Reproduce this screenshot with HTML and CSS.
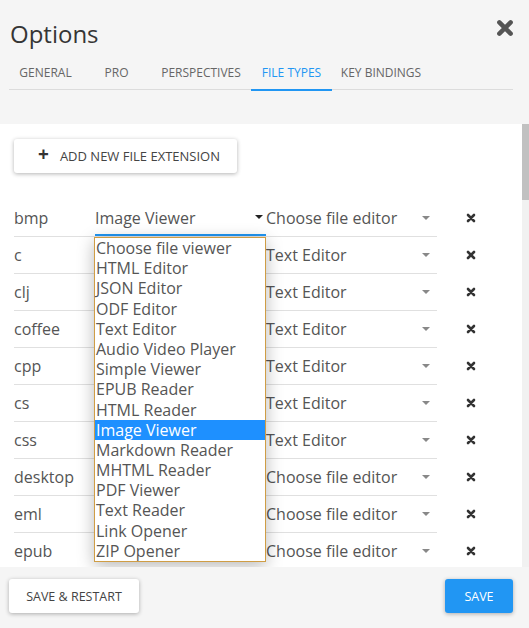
FILE: index.html
```html
<!DOCTYPE html>
<html>
<head>
<meta charset="utf-8">
<link rel="stylesheet" href="styles.css">
</head>
<body>
<div class="dialog">
  <div class="header">
    <h1 class="title">Options</h1>
    <svg class="close" viewBox="0 0 16 16"><path d="M3 3 L13 13 M13 3 L3 13" stroke="#555" stroke-width="4" stroke-linecap="round"/></svg>
  </div>
  <div class="tabs">
    <div class="tab t1">GENERAL</div>
    <div class="tab t2">PRO</div>
    <div class="tab t3">PERSPECTIVES</div>
    <div class="tab t4 active">FILE TYPES</div>
    <div class="tab t5">KEY BINDINGS</div>
  </div>
  <div class="panel">
    <div class="main">
      <button class="add"><span class="plus">+</span>ADD NEW FILE EXTENSION</button>
      <div class="rows">
        <div class="row top">
          <div class="ext">bmp</div>
          <div class="sel viewer focused">Image Viewer<span class="arrow dark"></span>
            <ul class="dropdown">
              <li>Choose file viewer</li>
              <li>HTML Editor</li>
              <li>JSON Editor</li>
              <li>ODF Editor</li>
              <li>Text Editor</li>
              <li>Audio Video Player</li>
              <li>Simple Viewer</li>
              <li>EPUB Reader</li>
              <li>HTML Reader</li>
              <li class="hl">Image Viewer</li>
              <li>Markdown Reader</li>
              <li>MHTML Reader</li>
              <li>PDF Viewer</li>
              <li>Text Reader</li>
              <li>Link Opener</li>
              <li>ZIP Opener</li>
            </ul>
          </div>
          <div class="sel editor">Choose file editor<span class="arrow"></span></div>
          <div class="del"><svg viewBox="0 0 10 10"><path d="M2 2 L8 8 M8 2 L2 8" stroke="#333" stroke-width="2.6" stroke-linecap="round"/></svg></div>
        </div>
        <div class="row"><div class="ext">c</div><div class="sel viewer"></div><div class="sel editor">Text Editor<span class="arrow"></span></div><div class="del"><svg viewBox="0 0 10 10"><path d="M2 2 L8 8 M8 2 L2 8" stroke="#333" stroke-width="2.6" stroke-linecap="round"/></svg></div></div>
        <div class="row"><div class="ext">clj</div><div class="sel viewer"></div><div class="sel editor">Text Editor<span class="arrow"></span></div><div class="del"><svg viewBox="0 0 10 10"><path d="M2 2 L8 8 M8 2 L2 8" stroke="#333" stroke-width="2.6" stroke-linecap="round"/></svg></div></div>
        <div class="row"><div class="ext">coffee</div><div class="sel viewer"></div><div class="sel editor">Text Editor<span class="arrow"></span></div><div class="del"><svg viewBox="0 0 10 10"><path d="M2 2 L8 8 M8 2 L2 8" stroke="#333" stroke-width="2.6" stroke-linecap="round"/></svg></div></div>
        <div class="row"><div class="ext">cpp</div><div class="sel viewer"></div><div class="sel editor">Text Editor<span class="arrow"></span></div><div class="del"><svg viewBox="0 0 10 10"><path d="M2 2 L8 8 M8 2 L2 8" stroke="#333" stroke-width="2.6" stroke-linecap="round"/></svg></div></div>
        <div class="row"><div class="ext">cs</div><div class="sel viewer"></div><div class="sel editor">Text Editor<span class="arrow"></span></div><div class="del"><svg viewBox="0 0 10 10"><path d="M2 2 L8 8 M8 2 L2 8" stroke="#333" stroke-width="2.6" stroke-linecap="round"/></svg></div></div>
        <div class="row"><div class="ext">css</div><div class="sel viewer"></div><div class="sel editor">Text Editor<span class="arrow"></span></div><div class="del"><svg viewBox="0 0 10 10"><path d="M2 2 L8 8 M8 2 L2 8" stroke="#333" stroke-width="2.6" stroke-linecap="round"/></svg></div></div>
        <div class="row"><div class="ext">desktop</div><div class="sel viewer"></div><div class="sel editor">Choose file editor<span class="arrow"></span></div><div class="del"><svg viewBox="0 0 10 10"><path d="M2 2 L8 8 M8 2 L2 8" stroke="#333" stroke-width="2.6" stroke-linecap="round"/></svg></div></div>
        <div class="row"><div class="ext">eml</div><div class="sel viewer"></div><div class="sel editor">Choose file editor<span class="arrow"></span></div><div class="del"><svg viewBox="0 0 10 10"><path d="M2 2 L8 8 M8 2 L2 8" stroke="#333" stroke-width="2.6" stroke-linecap="round"/></svg></div></div>
        <div class="row"><div class="ext">epub</div><div class="sel viewer"></div><div class="sel editor">Choose file editor<span class="arrow"></span></div><div class="del"><svg viewBox="0 0 10 10"><path d="M2 2 L8 8 M8 2 L2 8" stroke="#333" stroke-width="2.6" stroke-linecap="round"/></svg></div></div>
      </div>
    </div>
    <div class="scrollbar"><div class="thumb"></div></div>
  </div>
  <div class="footer">
    <button class="btn restart">SAVE &amp; RESTART</button>
    <button class="btn save">SAVE</button>
  </div>
</div>
</body>
</html>
```
FILE: styles.css
```css
* { box-sizing: border-box; }
html, body { margin: 0; padding: 0; }
body {
  background: #f5f5f5;
  font-family: "Open Sans", "Noto Sans", sans-serif;
  color: #555;
  width: 529px;
  height: 628px;
  overflow: hidden;
}
.dialog { display: flex; flex-direction: column; height: 628px; }
.header {
  display: flex;
  justify-content: space-between;
  align-items: flex-start;
  padding: 19px 16px 0 10px;
  height: 57px;
}
.title {
  margin: 0;
  font-weight: 400;
  font-size: 24px;
  line-height: 30px;
  color: #353535;
}
.close { width: 18px; height: 18px; margin-top: 0px; margin-right: -1px; }
.tabs {
  display: flex;
  margin: 0 16px 0 9px;
  border-bottom: 1px solid #dcdcdc;
  height: 33px;
}
.tab {
  font-size: 12px;
  color: #666;
  height: 32px;
  line-height: 32px;
  text-align: center;
  white-space: nowrap;
}
.t1 { width: 73px; }
.t2 { width: 69px; }
.t3 { width: 100px; }
.t4 { width: 81px; }
.t5 { width: 98px; }
.tab.active { color: #2196f3; border-bottom: 2px solid #2196f3; height: 34px; }
.panel {
  margin-top: 34px;
  height: 443px;
  display: flex;
}
.main {
  flex: 1;
  background: #fff;
  overflow: hidden;
  padding: 15px 0 0 14px;
}
.scrollbar { width: 7px; background: #f1f1f1; }
.thumb { height: 76px; background: #c1c1c1; }
.add {
  display: flex;
  align-items: center;
  width: 223px;
  height: 34px;
  border: none;
  background: #fff;
  border-radius: 3px;
  box-shadow: 0 1px 4px rgba(0,0,0,0.3);
  font-family: inherit;
  font-size: 13px;
  color: #444;
  padding: 0 0 0 24px;
}
.plus { font-size: 19px; font-weight: 700; color: #333; margin-right: 11px; line-height: 1; margin-top: -3px; }
.rows { margin-top: 27px; }
.row {
  display: flex;
  height: 37px;
  font-size: 16px;
  position: relative;
}
.row.top { z-index: 2; }
.ext, .sel {
  flex: none;
  height: 37px;
  line-height: 36px;
  border-bottom: 1px solid #e0e0e0;
  white-space: nowrap;
}
.ext { width: 81px; }
.sel { width: 171px; position: relative; }
.sel.focused::after {
  content: "";
  position: absolute;
  left: 0; right: 0; bottom: 0;
  height: 2px;
  background: #2196f3;
}
.arrow {
  position: absolute;
  right: 7px;
  top: 16px;
  width: 0; height: 0;
  border-left: 4px solid transparent;
  border-right: 4px solid transparent;
  border-top: 4px solid #888;
}
.arrow.dark { border-top-color: #222; right: 3px; top: 15px; }
.del { flex: none; width: 39px; display: flex; justify-content: flex-end; align-items: center; height: 36px; }
.del svg { width: 10px; height: 10px; }
.dropdown {
  position: absolute;
  left: -1px;
  top: 37px;
  width: 172px;
  margin: 0;
  padding: 0;
  list-style: none;
  background: #fff;
  border: 1px solid #cf9d45;
  box-shadow: 0 4px 16px rgba(0,0,0,0.28);
  z-index: 5;
}
.dropdown li {
  height: 20.2px;
  line-height: 20.2px;
  padding-left: 1px;
  font-size: 16px;
  color: #555;
  white-space: nowrap;
}
.dropdown li.hl { background: #1e90ff; color: #fff; }
.footer {
  display: flex;
  justify-content: space-between;
  padding: 12px 16px 0 9px;
}
.btn {
  height: 34px;
  border: none;
  border-radius: 3px;
  font-family: inherit;
  font-size: 12.5px;
  box-shadow: 0 1px 4px rgba(0,0,0,0.3);
}
.restart { width: 130px; background: #fff; color: #444; }
.save { width: 68px; background: #2196f3; color: #fff; }
```
